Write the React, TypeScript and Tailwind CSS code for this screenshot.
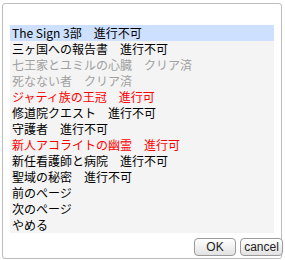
const ITEMS: { label: string; tone: "normal" | "done" | "open" }[] = [
  { label: "The Sign 3部\u3000進行不可", tone: "normal" },
  { label: "三ヶ国への報告書\u3000進行不可", tone: "normal" },
  { label: "七王家とユミルの心臓\u3000クリア済", tone: "done" },
  { label: "死なない者\u3000クリア済", tone: "done" },
  { label: "ジャティ族の王冠\u3000進行可", tone: "open" },
  { label: "修道院クエスト\u3000進行不可", tone: "normal" },
  { label: "守護者\u3000進行不可", tone: "normal" },
  { label: "新人アコライトの幽霊\u3000進行可", tone: "open" },
  { label: "新任看護師と病院\u3000進行不可", tone: "normal" },
  { label: "聖域の秘密\u3000進行不可", tone: "normal" },
  { label: "前のページ", tone: "normal" },
  { label: "次のページ", tone: "normal" },
  { label: "やめる", tone: "normal" },
];

const TONE = {
  normal: "text-black",
  done: "text-[#a0a0a0]",
  open: "text-[#ff0000]",
};

function DialogButton({ label, width }: { label: string; width: string }) {
  return (
    <button
      className={`${width} h-[18px] rounded-[4px] border border-[#9a9a9a] bg-gradient-to-b from-white to-[#e2e2e2] text-[12px] leading-[16px] text-[#222] [font-family:'Liberation_Sans',Arial,sans-serif]`}
    >
      {label}
    </button>
  );
}

export default function App() {
  const selected = 0;

  return (
    <div className="h-[260px] w-[285px] bg-white pl-[2px] pt-[3px]">
      <div className="flex h-[256px] w-[280px] flex-col rounded-[3px] border border-[#bdbdbd] bg-white">
        {/* Menu list */}
        <ul className="mx-[7px] mt-[21px] bg-[#f4f4f4] [font-family:'Noto_Sans_CJK_JP',sans-serif]">
          {ITEMS.map((item, i) => (
            <li
              key={item.label}
              className={`h-[16px] whitespace-nowrap pl-[2px] text-[12px] leading-[15px] ${TONE[item.tone]} ${
                i === selected ? "bg-[#cde0ff]" : ""
              }`}
            >
              {item.label}
            </li>
          ))}
        </ul>

        {/* Buttons */}
        <div className="-mr-[2px] mt-[5px] flex justify-end gap-[4px]">
          <DialogButton label="OK" width="w-[42px]" />
          <DialogButton label="cancel" width="w-[43px]" />
        </div>
      </div>
    </div>
  );
}
